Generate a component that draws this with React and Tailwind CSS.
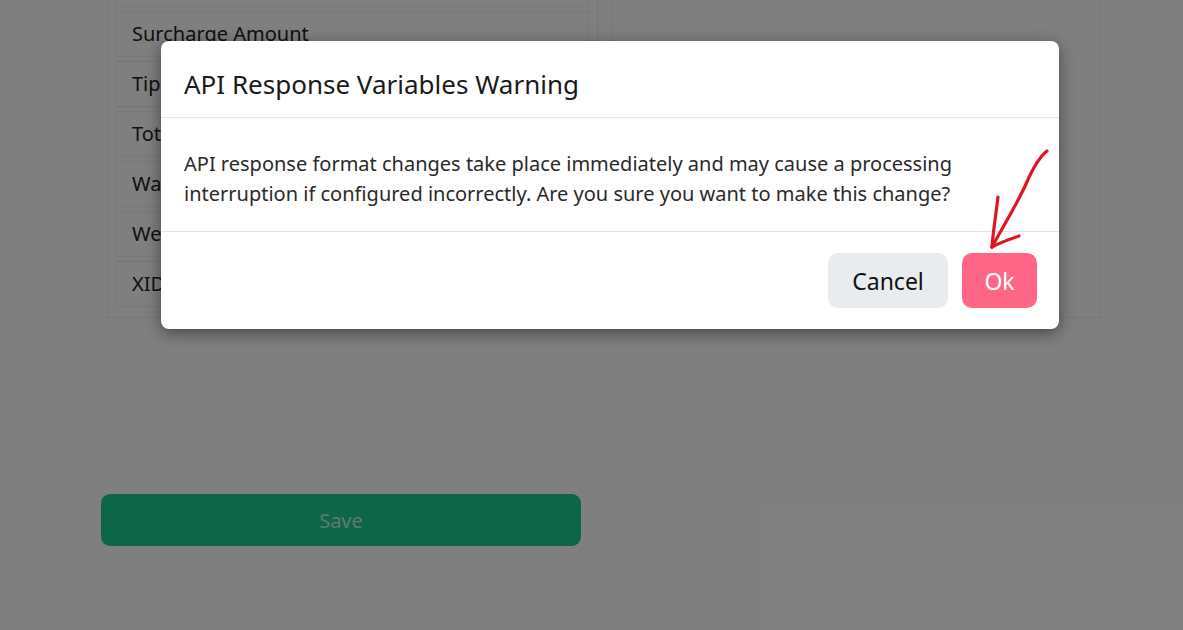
import React from "react";

const rows = ["Surcharge Amount", "Tip Amount", "Total Amount", "Wallet Type", "Website", "XID"];

const RedArrow = () => (
  <svg className="absolute left-0 top-0 pointer-events-none" width="1183" height="630" viewBox="0 0 1183 630">
    <g fill="none" stroke="#e0161e" strokeWidth="3.2" strokeLinecap="round" strokeLinejoin="round">
      <path d="M1047 151 C1038 158 1032 170 1026 184 C1016 206 1002 228 992 247" />
      <path d="M998 197 C996 214 993 232 992 247" />
      <path d="M992 247 C1001 242 1010 239 1019 236" />
    </g>
  </svg>
);

const App = () => {
  return (
    <div className="relative h-[630px] overflow-hidden bg-white font-['Noto_Sans',sans-serif]">
      {/* page underneath */}
      <div className="pl-[101px]">
        <div className="ml-[6px] mt-[-50px] flex gap-[13px]">
          <div className="w-[491px] border border-[#eeeeee] px-[8px] pt-[10px] pb-[10px]">
            <div className="flex flex-col gap-[4px]">
              <div className="h-[46px] border border-[#eeeeee]"></div>
              {rows.map((r) => (
                <div key={r} className="flex h-[46px] items-center border border-[#eeeeee] px-[15px] text-[20px] text-[#222]">
                  {r}
                </div>
              ))}
            </div>
          </div>
          <div className="w-[490px] border border-[#eeeeee]"></div>
        </div>
        <button className="mt-[176px] h-[52px] w-[480px] rounded-[9px] bg-[#1ccc92] pt-[2px] text-[20px] text-white/75">
          Save
        </button>
      </div>

      {/* overlay */}
      <div className="absolute inset-0 bg-black/50">
        <div className="ml-[161px] mt-[41px] w-[898px] rounded-[8px] bg-white shadow-[0_4px_16px_rgba(0,0,0,0.45)]">
          <div className="flex h-[77px] items-center border-b border-[#e3e3e3] px-[23px] pt-[10px] text-[26px] text-[#1a1a1a]">
            API Response Variables Warning
          </div>
          <div className="border-b border-[#e3e3e3] px-[23px] pt-[31px] pb-[22px] text-[20px] leading-[30px] text-[#2a2a2a]">
            API response format changes take place immediately and may cause a processing
            <br />
            interruption if configured incorrectly. Are you sure you want to make this change?
          </div>
          <div className="flex justify-end gap-[14px] px-[22px] pt-[21px] pb-[21px]">
            <button className="h-[55px] w-[120px] rounded-[10px] bg-[#e8ecef] pt-[2px] text-[23px] text-[#111]">Cancel</button>
            <button className="h-[55px] w-[75px] rounded-[10px] bg-[#ff6685] pt-[2px] text-[23px] text-white">Ok</button>
          </div>
        </div>
      </div>
      <RedArrow />
    </div>
  );
};

export default App;
